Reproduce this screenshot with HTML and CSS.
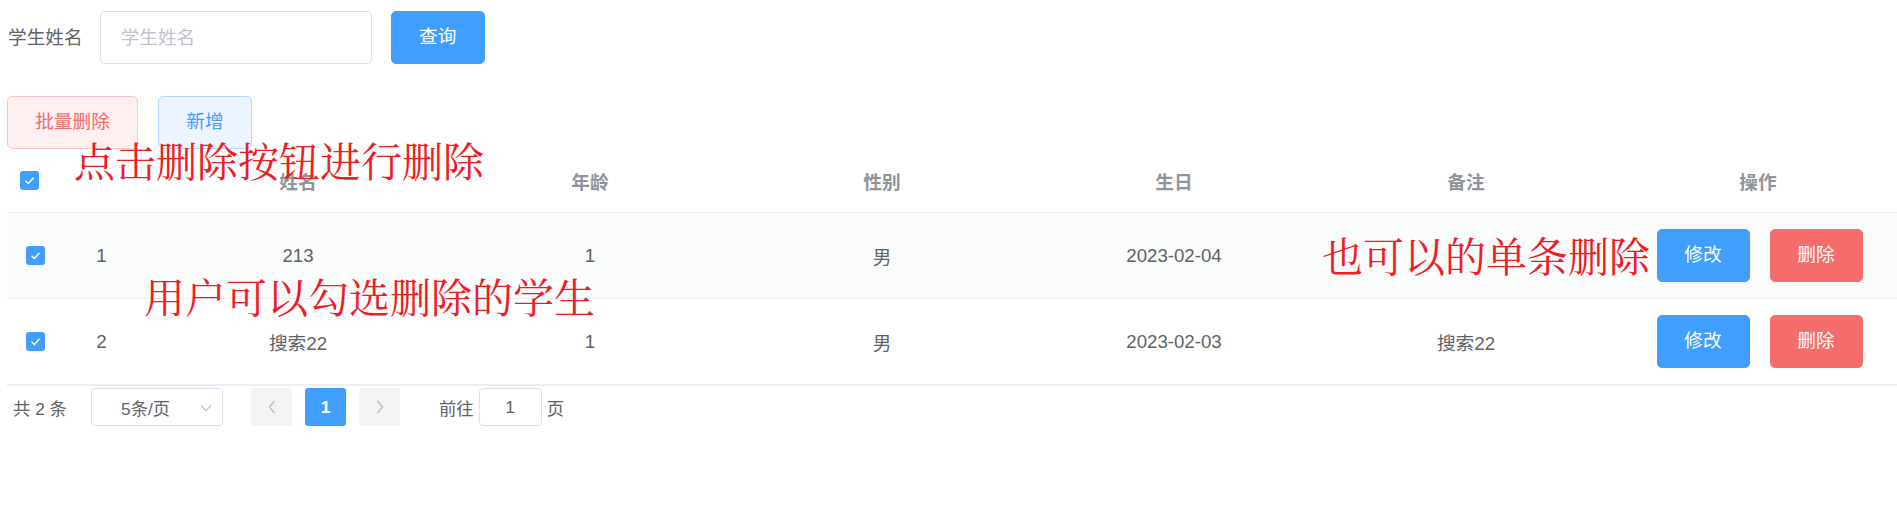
FILE: index.html
```html
<!DOCTYPE html>
<html lang="zh-CN">
<head>
<meta charset="utf-8">
<title>学生管理</title>
<link rel="stylesheet" href="styles.css">
</head>
<body>
<div class="page">
  <form class="search">
    <label class="search-label">学生姓名</label>
    <input class="text-input" type="text" placeholder="学生姓名">
    <button type="button" class="btn btn-primary btn-query">查询</button>
  </form>

  <div class="toolbar">
    <button type="button" class="btn btn-danger-plain btn-batch">批量删除</button>
    <button type="button" class="btn btn-primary-plain btn-add">新增</button>
  </div>

  <div class="table">
    <div class="tr thead">
      <div class="td sel sel-head"><span class="checkbox"><svg viewBox="0 0 19 19" width="19" height="19"><polyline points="5.5,9.8 8.4,12.5 13.5,6.8" fill="none" stroke="#fff" stroke-width="1.4"/></svg></span></div>
      <div class="td id"></div>
      <div class="td">姓名</div>
      <div class="td">年龄</div>
      <div class="td">性别</div>
      <div class="td">生日</div>
      <div class="td">备注</div>
      <div class="td">操作</div>
    </div>
    <div class="tr row row-hover">
      <div class="td sel"><span class="checkbox"><svg viewBox="0 0 19 19" width="19" height="19"><polyline points="5.5,9.8 8.4,12.5 13.5,6.8" fill="none" stroke="#fff" stroke-width="1.4"/></svg></span></div>
      <div class="td id">1</div>
      <div class="td">213</div>
      <div class="td">1</div>
      <div class="td">男</div>
      <div class="td">2023-02-04</div>
      <div class="td"></div>
      <div class="td ops">
        <button type="button" class="btn btn-primary">修改</button>
        <button type="button" class="btn btn-danger">删除</button>
      </div>
    </div>
    <div class="tr row last">
      <div class="td sel"><span class="checkbox"><svg viewBox="0 0 19 19" width="19" height="19"><polyline points="5.5,9.8 8.4,12.5 13.5,6.8" fill="none" stroke="#fff" stroke-width="1.4"/></svg></span></div>
      <div class="td id">2</div>
      <div class="td">搜索22</div>
      <div class="td">1</div>
      <div class="td">男</div>
      <div class="td">2023-02-03</div>
      <div class="td">搜索22</div>
      <div class="td ops">
        <button type="button" class="btn btn-primary">修改</button>
        <button type="button" class="btn btn-danger">删除</button>
      </div>
    </div>
  </div>

  <div class="pager">
    <span class="total">共 2 条</span>
    <div class="sizes">
      <span class="sizes-text">5条/页</span>
      <svg class="sizes-arrow" viewBox="0 0 12 8" width="12" height="8"><polyline points="1,1.5 6,6.5 11,1.5" fill="none" stroke="#c0c4cc" stroke-width="1.2"/></svg>
    </div>
    <span class="pg-btn pg-prev"><svg viewBox="0 0 8 14" width="8" height="14"><polyline points="6.5,1 1.5,7 6.5,13" fill="none" stroke="#c0c4cc" stroke-width="1.8"/></svg></span>
    <span class="pg-num">1</span>
    <span class="pg-btn pg-next"><svg viewBox="0 0 8 14" width="8" height="14"><polyline points="1.5,1 6.5,7 1.5,13" fill="none" stroke="#c0c4cc" stroke-width="1.8"/></svg></span>
    <span class="jump">前往</span>
    <span class="jump-input">1</span>
    <span class="jump-unit">页</span>
  </div>

  <div class="note note-1">点击删除按钮进行删除</div>
  <div class="note note-2">用户可以勾选删除的学生</div>
  <div class="note note-3">也可以的单条删除</div>
</div>
</body>
</html>
```

FILE: styles.css
```css
* { box-sizing: border-box; }

html, body {
  margin: 0;
  padding: 0;
  background: #fff;
}

body {
  width: 1897px;
  height: 509px;
  overflow: hidden;
  font-family: "Liberation Sans", "Noto Sans CJK SC", sans-serif;
  color: #606266;
  font-size: 18.67px;
}

.page {
  position: relative;
  width: 1897px;
  height: 509px;
  overflow: hidden;
}

/* search form */
.search {
  display: flex;
  align-items: center;
  margin: 0;
  padding: 11px 0 0 8px;
}

.search-label {
  font-size: 18.67px;
  color: #606266;
  padding-right: 17px;
  line-height: 53px;
}

.text-input {
  width: 272px;
  height: 53px;
  border: 1px solid #dcdfe6;
  border-radius: 5px;
  padding: 0 20px;
  font-family: inherit;
  font-size: 18.67px;
  color: #606266;
  outline: none;
}
.text-input::placeholder { color: #c0c4cc; }

.btn {
  height: 53px;
  border-radius: 5px;
  border: 1px solid transparent;
  font-family: inherit;
  font-size: 18.67px;
  padding: 0;
  cursor: pointer;
  line-height: 1;
}

.btn-primary {
  background: #409eff;
  border-color: #409eff;
  color: #fff;
  width: 94px;
}

.btn-danger {
  background: #f56c6c;
  border-color: #f56c6c;
  color: #fff;
  width: 93px;
}

.btn-query { margin-left: 19px; }

/* toolbar */
.toolbar {
  display: flex;
  gap: 20px;
  padding: 32px 0 0 7px;
}

.btn-danger-plain {
  background: #fef0f0;
  border-color: #fbc4c4;
  color: #f56c6c;
  width: 131px;
}

.btn-primary-plain {
  background: #ecf5ff;
  border-color: #b3d8ff;
  color: #409eff;
  width: 94px;
}

/* table */
.table {
  margin-left: 7px;
  width: 1897px;
}

.tr {
  display: grid;
  grid-template-columns: 44px 101px repeat(6, 292px);
  align-items: center;
  border-bottom: 1px solid #ebeef5;
}

.thead {
  height: 64px;
  color: #909399;
  font-weight: bold;
}

.row { height: 86px; }
.row-hover { background: #fafbfb; }
.row.last { height: 87px; border-bottom: 2px solid #ebeef5; }

.td {
  text-align: center;
  white-space: nowrap;
}

.td.sel {
  text-align: left;
  padding-left: 19px;
  display: flex;
  align-items: center;
}
.td.sel-head { padding-left: 13px; }

.checkbox {
  display: inline-block;
  width: 19px;
  height: 19px;
  background: #409eff;
  border-radius: 3px;
}
.checkbox svg { display: block; }

.ops {
  display: flex;
  justify-content: center;
  gap: 20px;
  padding-left: 3px;
}
.ops .btn-primary { width: 93px; }

/* pager */
.pager {
  display: flex;
  align-items: center;
  height: 38px;
  margin-top: 2px;
  padding-left: 13px;
  font-size: 17.33px;
  color: #606266;
}

.total { width: 57px; white-space: pre; }

.sizes {
  margin-left: 21px;
  width: 132px;
  height: 38px;
  border: 1px solid #dcdfe6;
  border-radius: 4px;
  display: flex;
  align-items: center;
  position: relative;
}
.sizes-text {
  padding-left: 29px;
}
.sizes-arrow {
  position: absolute;
  right: 10px;
  top: 15px;
}

.pg-btn, .pg-num {
  width: 41px;
  height: 38px;
  border-radius: 3px;
  display: flex;
  align-items: center;
  justify-content: center;
}
.pg-btn { background: #f4f4f5; }
.pg-prev { margin-left: 28px; }
.pg-num {
  margin: 0 13px;
  background: #409eff;
  color: #fff;
  font-weight: bold;
}

.jump { margin-left: 39px; }
.jump-input {
  margin-left: 5px;
  width: 63px;
  height: 38px;
  border: 1px solid #dcdfe6;
  border-radius: 4px;
  display: flex;
  align-items: center;
  justify-content: center;
}
.jump-unit { margin-left: 5px; }

/* red annotations laid over the UI */
.note {
  position: absolute;
  font-family: "Noto Serif CJK SC", "Noto Sans CJK SC", serif;
  font-size: 41px;
  line-height: 1;
  color: #ee1c24;
  white-space: nowrap;
  letter-spacing: 0;
}
.note-1 { left: 74px; top: 139px; }
.note-2 { left: 144px; top: 275px; }
.note-3 { left: 1322px; top: 234px; }
```
